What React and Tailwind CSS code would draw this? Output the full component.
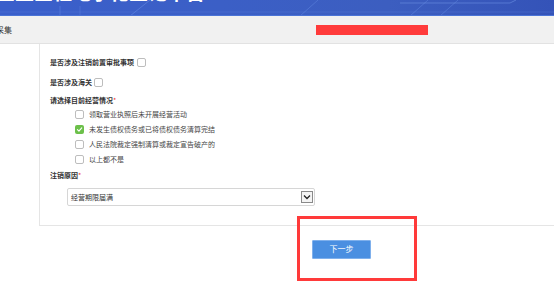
import React from "react";

function Box({ checked }) {
  if (checked) {
    return (
      <span className="block w-[9px] h-[9px] rounded-[2px] bg-[#6cc04a] flex items-center justify-center shrink-0">
        <svg width="7" height="7" viewBox="0 0 10 10">
          <path d="M2 5.2 L4.2 7.4 L8.2 2.8" fill="none" stroke="#fff" strokeWidth="1.6" strokeLinecap="round" strokeLinejoin="round" />
        </svg>
      </span>
    );
  }
  return <span className="block w-[9px] h-[9px] rounded-[2px] border border-[#bdbdbd] bg-white shrink-0" />;
}

function Option({ checked, text }) {
  return (
    <div className="flex items-center h-[15px] pl-[25px]">
      <Box checked={checked} />
      <span className="ml-[5px] text-[7px] leading-[11px] text-[#444]">{text}</span>
    </div>
  );
}

export default function App() {
  return (
    <div
      className="relative w-[554px] h-[302px] bg-white overflow-hidden"
      style={{ fontFamily: '"Noto Sans CJK SC", "Noto Sans", sans-serif' }}
    >
      {/* header */}
      <div className="relative h-[16px] overflow-hidden bg-[linear-gradient(90deg,#3a5fcb_0%,#3b5fc6_40%,#3c5ec0_70%,#3453b8_100%)]">
        <svg className="absolute inset-0" width="554" height="16">
          <line x1="0" y1="12" x2="554" y2="12" stroke="#5a82de" strokeWidth="0.6" opacity="0.6" />
          <line x1="130" y1="16" x2="150" y2="0" stroke="#6b92e8" strokeWidth="1" opacity="0.5" />
          <line x1="300" y1="16" x2="318" y2="0" stroke="#6b92e8" strokeWidth="1" opacity="0.4" />
          <line x1="410" y1="16" x2="428" y2="0" stroke="#6b92e8" strokeWidth="1" opacity="0.4" />
          <line x1="440" y1="16" x2="458" y2="0" stroke="#6b92e8" strokeWidth="1" opacity="0.4" />
          <line x1="400" y1="3" x2="510" y2="3" stroke="#7aa0ee" strokeWidth="0.8" opacity="0.6" />
          <line x1="510" y1="3" x2="516" y2="0" stroke="#7aa0ee" strokeWidth="0.8" opacity="0.6" />
          <line x1="60" y1="16" x2="60" y2="6" stroke="#6b92e8" strokeWidth="1" opacity="0.4" />
          <line x1="80" y1="16" x2="80" y2="6" stroke="#6b92e8" strokeWidth="1" opacity="0.3" />
        </svg>
        <div className="absolute left-[-4px] top-[-20px] text-[19px] leading-[24px] font-bold text-white whitespace-nowrap">
          企业全程电子化登记平台
        </div>
        <div className="absolute left-0 right-0 bottom-0 h-[1px] bg-[#4b74d6]" />
      </div>

      {/* gray bar */}
      <div className="h-[28px] bg-[#f1f1f1] border-b border-[#e2e2e2] flex items-center">
        <span className="ml-[-20px] text-[8px] leading-[10px] text-[#333] whitespace-nowrap">信息采集</span>
        <span className="ml-[304px] w-[112px] h-[10px] bg-[#ff3b3b]" />
      </div>

      {/* card */}
      <div className="pl-[39px]">
        <div className="h-[182px] border-l border-b border-[#e5e5e5] pl-[10px] pt-[13px] flex flex-col">
          <div className="flex items-center h-[11px]">
            <span className="text-[7px] leading-[11px] font-bold text-[#333]">是否涉及注销前置审批事项</span>
            <span className="ml-[3px]"><Box /></span>
          </div>
          <div className="flex items-center h-[11px] mt-[9px]">
            <span className="text-[7px] leading-[11px] font-bold text-[#333]">是否涉及海关</span>
            <span className="ml-[2px]"><Box /></span>
          </div>
          <div className="flex items-center h-[11px] mt-[7px]">
            <span className="text-[7px] leading-[11px] font-bold text-[#333]">请选择目前经营情况</span>
            <span className="text-[7px] leading-[11px] text-[#e33]">*</span>
          </div>
          <div className="mt-[1px] flex flex-col">
            <Option text="领取营业执照后未开展经营活动" />
            <Option checked text="未发生债权债务或已将债权债务清算完结" />
            <Option text="人民法院裁定强制清算或裁定宣告破产的" />
            <Option text="以上都不是" />
          </div>
          <div className="flex items-center h-[11px] mt-[3px]">
            <span className="text-[7px] leading-[11px] font-bold text-[#333]">注销原因</span>
            <span className="text-[7px] leading-[11px] text-[#e33]">*</span>
          </div>
          <div className="mt-[7px] ml-[17px] w-[248px] h-[18px] border border-[#d6d6d6] rounded-[2px] flex items-center justify-between pl-[3px] pr-[1px]">
            <span className="text-[7px] leading-[11px] text-[#333]">经营期限届满</span>
            <span className="w-[12px] h-[12px] border border-[#8a8a8a] bg-[#f4f4f4] flex items-center justify-center">
              <svg width="8" height="6" viewBox="0 0 8 6">
                <path d="M1 1.5 L4 4.5 L7 1.5" fill="none" stroke="#222" strokeWidth="1.3" />
              </svg>
            </span>
          </div>
        </div>
      </div>

      {/* button */}
      <div className="pl-[312px] pt-[7px]">
        <button className="w-[59px] h-[19px] bg-[#4a8fe1] border border-[#7fb0ec] text-white text-[8px] leading-[10px] rounded-[1px]">
          下一步
        </button>
      </div>

      {/* red annotation box */}
      <div className="absolute left-[297px] top-[216px] w-[120px] h-[65px] border-[3px] border-[#ff3a3a]" />
    </div>
  );
}
